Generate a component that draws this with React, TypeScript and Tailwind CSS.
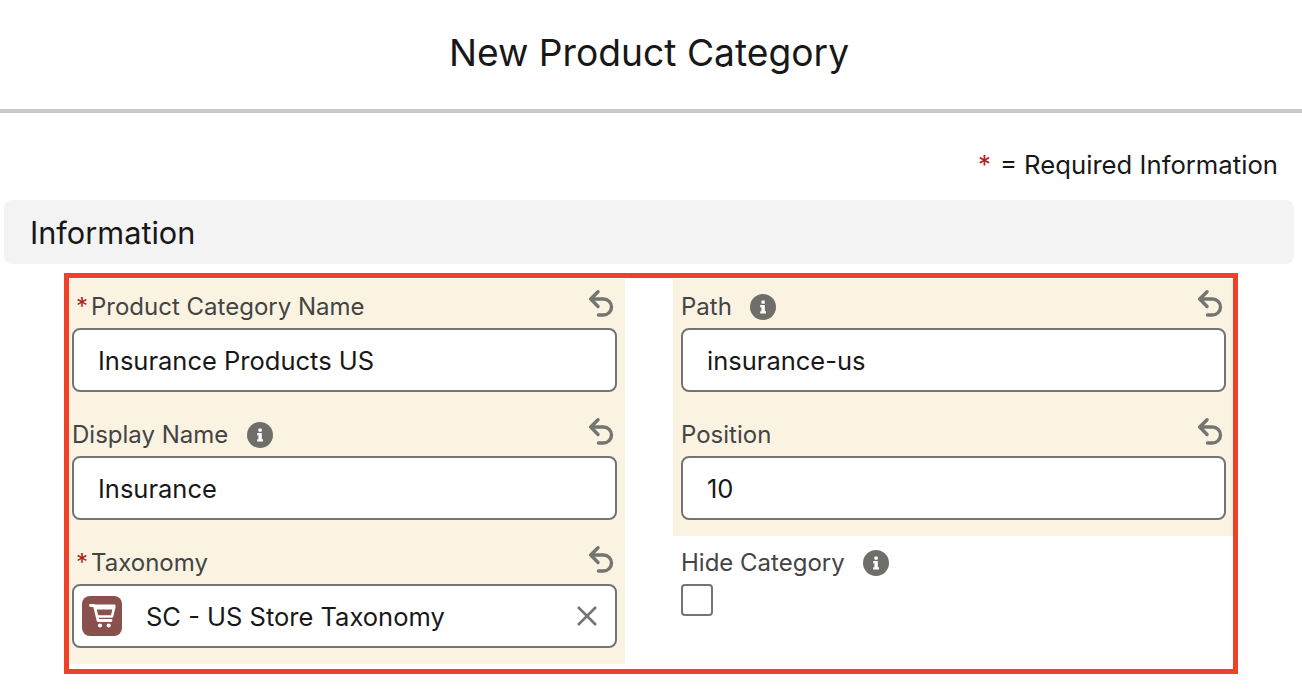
import { ReactNode } from "react";

function UndoIcon() {
  return (
    <svg width="25" height="27" viewBox="0 0 25 27" fill="none" stroke="#747474" strokeWidth="3.4" strokeLinecap="round" strokeLinejoin="round">
      <path d="M9 1.8 L1.8 9 L9 16.5" />
      <path d="M2 9 H14.5 A8 8 0 0 1 14.5 25 H9.5" />
    </svg>
  );
}

function InfoIcon() {
  return (
    <svg width="26" height="26" viewBox="0 0 26 26" className="shrink-0">
      <circle cx="13" cy="13" r="13" fill="#706e6b" />
      <rect x="11.4" y="6.6" width="3.4" height="3.1" rx="0.8" fill="#fff" />
      <path d="M10.2 11 H14.8 V17.2 H16 V19.4 H10.2 V17.2 H11.4 V13.2 H10.2 Z" fill="#fff" />
    </svg>
  );
}

function CartIcon() {
  return (
    <div className="w-10 h-10 rounded-lg bg-[#8a504d] flex items-center justify-center shrink-0">
      <svg width="40" height="40" viewBox="0 0 40 40" fill="none">
        <path d="M8.5 9.5 H12 L13 12 L16 24.5 H29" stroke="#fff" strokeWidth="2.8" strokeLinejoin="round" strokeLinecap="round" />
        <path d="M12 8.5 H33.5 L32.5 13.5 H13 Z" fill="#fff" />
        <path d="M32.5 10 L30 20.5 H16" stroke="#fff" strokeWidth="2.6" strokeLinejoin="round" />
        <circle cx="18" cy="29.5" r="2.1" fill="#fff" />
        <circle cx="26.7" cy="29.5" r="2.1" fill="#fff" />
      </svg>
    </div>
  );
}

function Field({
  label,
  value,
  required,
  info,
  children,
}: {
  label: string;
  value?: string;
  required?: boolean;
  info?: boolean;
  children?: ReactNode;
}) {
  return (
    <div className="h-[128px] relative">
      <div className="h-[49px] flex items-center pt-[6px] text-[#444444] text-[24px]">
        {required && (
          <span className="text-[#b3201c] w-[19px] pl-1 leading-none">*</span>
        )}
        <span>{label}</span>
        {info && (
          <span className="ml-[18.5px]">
            <InfoIcon />
          </span>
        )}
        <span className="ml-auto mr-[3px] -mt-[7px]">
          <UndoIcon />
        </span>
      </div>
      {children ?? (
        <div className="h-[64px] bg-white border-2 border-[#747474] rounded-lg flex items-center pl-[24px] pt-0.5 text-[25.5px] text-[#181818]">
          {value}
        </div>
      )}
    </div>
  );
}

export default function App() {
  return (
    <div className="w-[1302px] h-[689px] overflow-hidden bg-white font-['Inter',sans-serif]">
      <div className="h-[113px] border-b-4 border-[#c9c9c9] flex items-center justify-center pb-[3px] pr-1">
        <h1 className="text-[37.2px] text-[#181818]">New Product Category</h1>
      </div>
      <div className="h-[87px] flex items-center justify-end pr-6 text-[25.7px] text-[#181818] pt-[18px]">
        <span className="text-[#b3201c] mr-[9px]">*</span>
        <span>= Required Information</span>
      </div>
      <div className="ml-1 mr-2 h-16 bg-[#f3f3f3] rounded-lg flex items-center pl-[26px] pt-0.5 text-[30.7px] text-[#181818]">
        Information
      </div>
      <div className="ml-16 mt-[9px] w-[1174px] h-[401px] border-[5px] border-[#ee4127] pt-px grid grid-cols-[556px_560px] gap-x-12 items-start">
        <div className="bg-[#faf3e2] pl-[3px] pr-2 h-[385px]">
          <Field label="Product Category Name" value="Insurance Products US" required />
          <Field label="Display Name" value="Insurance" info />
          <Field label="Taxonomy" required>
            <div className="h-[64px] bg-white border-2 border-[#747474] rounded-lg flex items-center pl-2 pr-[18px] text-[25.5px] text-[#181818]">
              <CartIcon />
              <span className="ml-6 pt-0.5">SC - US Store Taxonomy</span>
              <svg className="ml-auto" width="20" height="20" viewBox="0 0 20 20" stroke="#747474" strokeWidth="2.6">
                <path d="M1 1 L19 19 M19 1 L1 19" />
              </svg>
            </div>
          </Field>
        </div>
        <div>
          <div className="bg-[#faf3e2] pl-2 pr-[7px] h-[257px]">
            <Field label="Path" value="insurance-us" info />
            <Field label="Position" value="10" />
          </div>
          <div className="pl-2">
            <div className="h-[48px] flex items-center pt-[5px] text-[#444444] text-[24px]">
              <span>Hide Category</span>
              <span className="ml-[18.5px]">
                <InfoIcon />
              </span>
            </div>
            <div className="w-8 h-8 bg-white border-2 border-[#747474] rounded" />
          </div>
        </div>
      </div>
    </div>
  );
}
